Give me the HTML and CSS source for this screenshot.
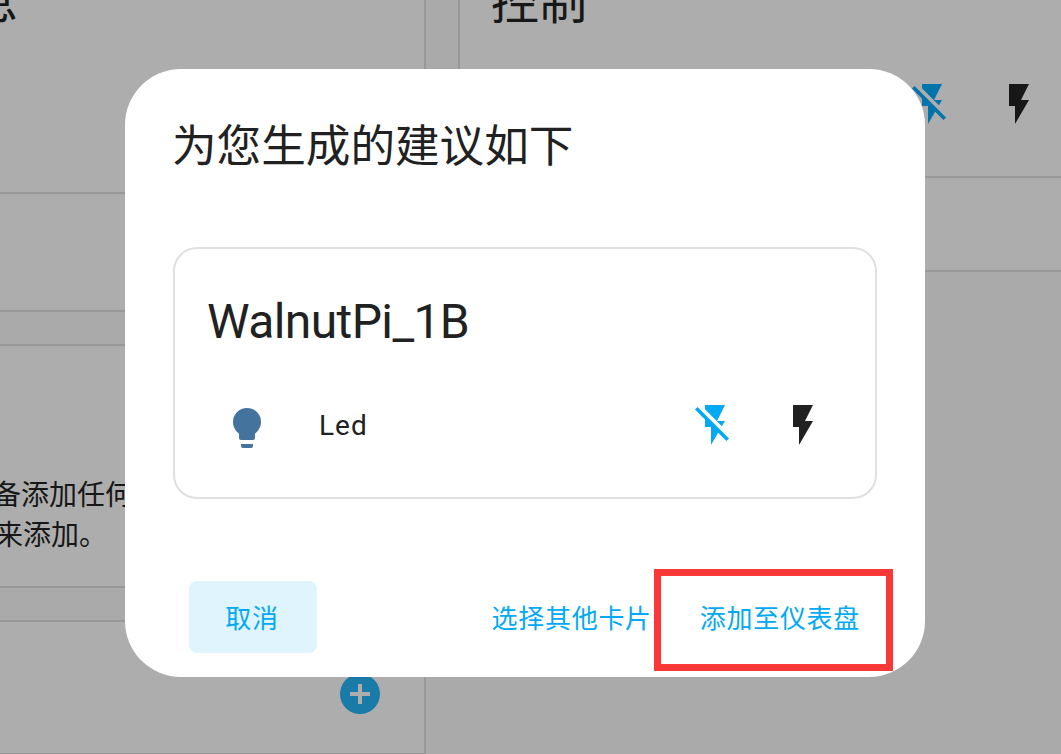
FILE: index.html
```html
<!DOCTYPE html>
<html lang="zh-CN">
<head>
<meta charset="utf-8">
<title>WalnutPi</title>
<link rel="stylesheet" href="styles.css">
</head>
<body>
<svg class="defs" width="0" height="0" aria-hidden="true">
  <symbol id="flash" viewBox="0 0 24 24"><path d="M7,2V13H10V22L17,10H13L17,2H7Z"/></symbol>
  <symbol id="flash-off" viewBox="0 0 24 24"><path d="M17,10H13L17,2H7V4.18L15.46,12.64M3.27,3L2,4.27L7,9.27V13H10V22L13.58,15.86L17.73,20L19,18.73L3.27,3Z"/></symbol>
  <symbol id="bulb" viewBox="0 0 24 24"><path d="M12,2A7,7 0 0,0 5,9C5,11.38 6.19,13.47 8,14.74V17A1,1 0 0,0 9,18H15A1,1 0 0,0 16,17V14.74C17.81,13.47 19,11.38 19,9A7,7 0 0,0 12,2M9,21A1,1 0 0,0 10,22H14A1,1 0 0,0 15,21V20H9V21Z"/></symbol>
  <symbol id="plus" viewBox="0 0 24 24"><path d="M17,13H13V17H11V13H7V11H11V7H13V11H17M12,2A10,10 0 0,0 2,12A10,10 0 0,0 12,22A10,10 0 0,0 22,12A10,10 0 0,0 12,2Z"/></symbol>
</svg>
<main class="page">
  <div class="column">
    <section class="card info">
      <h2 class="card-title">息</h2>
      <div class="card-footer"></div>
    </section>
    <section class="card empty">
      <p class="line">备添加任何</p>
      <p class="line second">来添加。</p>
    </section>
    <section class="card more">
      <svg class="icon add"><use href="#plus"/></svg>
    </section>
  </div>
  <div class="column wide">
    <section class="card controls">
      <h2 class="card-title">控制</h2>
      <div class="actions">
        <svg class="icon off"><use href="#flash-off"/></svg>
        <svg class="icon"><use href="#flash"/></svg>
      </div>
      <div class="card-footer"></div>
    </section>
  </div>
</main>
<div class="dialog" role="dialog">
  <h1 class="dialog-title">为您生成的建议如下</h1>
  <section class="suggestion">
    <h2 class="device">WalnutPi_1B</h2>
    <div class="entity">
      <svg class="icon bulb"><use href="#bulb"/></svg>
      <span class="name">Led</span>
      <div class="toggles">
        <svg class="icon off"><use href="#flash-off"/></svg>
        <svg class="icon"><use href="#flash"/></svg>
      </div>
    </div>
  </section>
  <footer class="buttons">
    <button class="btn cancel">取消</button>
    <button class="btn pick">选择其他卡片</button>
    <button class="btn add-btn">添加至仪表盘</button>
  </footer>
  <div class="highlight"></div>
</div>
</body>
</html>
```

FILE: styles.css
```css
* { box-sizing: border-box; }
body {
  margin: 0;
  width: 1061px;
  height: 754px;
  overflow: hidden;
  background: #aaaaaa;
  color: #171717;
  font-family: Roboto, "Noto Sans CJK SC", sans-serif;
}
h1, h2, p { margin: 0; font-weight: 400; }
.defs { display: block; }
.icon { display: block; flex: none; width: 48px; height: 48px; fill: currentColor; }

.page { display: flex; gap: 32px; height: 754px; overflow: hidden; }
.column { display: flex; flex-direction: column; gap: 32px; width: 426px; flex: none; }
.column.wide { width: 603px; }
.card { background: #adadad; border: 2px solid #989898; border-left: 0; flex: none; }
.card-title { font-size: 48px; line-height: 56px; }
.card-footer { border-top: 2px solid #989898; }

.info { display: flow-root; height: 312px; border-top: 0; }
.info .card-title { height: 217px; margin: -25px 0 0 -30px; }
.empty { height: 244px; padding-top: 130px; font-size: 28px; line-height: 40px; }
.line { margin-left: -7px; white-space: nowrap; }
.second { margin-left: -5px; }
.more { height: 135px; display: flex; justify-content: flex-end; align-items: flex-start; padding: 48px 40px 0 0; }
.add { color: #1a7ba9; }

.controls { display: flow-root; height: 272px; border-top: 0; border-left: 2px solid #989898; border-right: 0; }
.controls .card-title { margin: -25px 0 0 31px; height: 56px; }
.actions { display: flex; justify-content: flex-end; gap: 39px; height: 145px; padding: 49px 18px 0 0; }
.actions .off { color: #0074ab; }

.dialog {
  position: absolute;
  left: 125px;
  top: 69px;
  width: 800px;
  height: 608px;
  padding: 46px 48px 24px;
  border-radius: 56px;
  background: #fff;
  color: #212121;
}
.dialog-title { margin-left: -1px; font-size: 44.6px; line-height: 64px; height: 132px; }
.suggestion { height: 252px; border: 2px solid #e0e0e0; border-radius: 24px; padding: 41px 32px 0; }
.device { font-size: 48px; line-height: 64px; height: 111px; letter-spacing: -0.6px; }
.entity { display: flex; align-items: center; height: 48px; padding: 0 16px; }
.bulb { color: #44739e; position: relative; top: 3px; }
.name { margin-left: 48px; font-size: 28px; letter-spacing: 1px; }
.toggles { display: flex; gap: 40px; margin-left: auto; }
.toggles .off { color: #03a9f4; }
.buttons { display: flex; padding: 82px 0 0 16px; }
.btn {
  height: 72px;
  padding: 4px 0 0;
  border: 0;
  border-radius: 8px;
  background: none;
  color: #03a9f4;
  font: 400 26px/68px Roboto, "Noto Sans CJK SC", sans-serif;
  letter-spacing: 0.7px;
  white-space: nowrap;
}
.cancel { width: 128px; padding-right: 2px; background: #dff4fd; }
.pick { margin-left: auto; }
.add-btn { margin: 0 17px 0 48px; }
.highlight {
  position: absolute;
  left: 529px;
  top: 500px;
  width: 239px;
  height: 102px;
  border: 7px solid #fb3838;
}
```
